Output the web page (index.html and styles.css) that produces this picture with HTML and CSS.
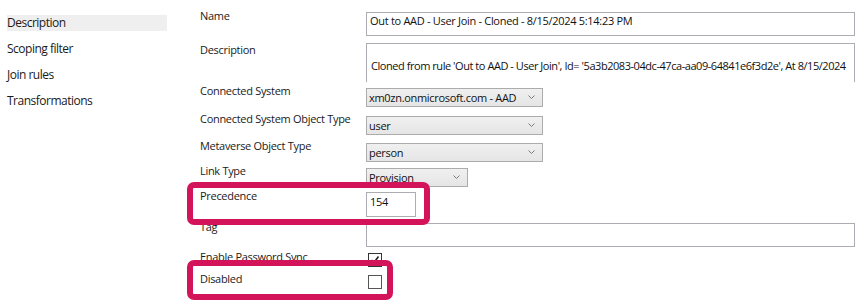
FILE: index.html
```html
<!DOCTYPE html>
<html lang="en">
  <head>
    <meta charset="UTF-8" />
    <title>Sync Rule</title>
    <link rel="stylesheet" href="styles.css">
  </head>
  <body>
    <div class="page">
      <ul class="nav">
        <li class="nav__item active">Description</li>
        <li class="nav__item">Scoping filter</li>
        <li class="nav__item">Join rules</li>
        <li class="nav__item">Transformations</li>
      </ul>

      <div class="form">
        <div class="row row--name">
          <span class="label">Name</span>
          <div class="input input--wide">Out to AAD - User Join - Cloned - 8/15/2024 5:14:23 PM</div>
        </div>
        <div class="row row--desc">
          <span class="label label--desc">Description</span>
          <div class="textarea">Cloned from rule 'Out to AAD - User Join', Id= '5a3b2083-04dc-47ca-aa09-64841e6f3d2e', At 8/15/2024</div>
        </div>
        <div class="row row--cs">
          <span class="label">Connected System</span>
          <div class="select">xm0zn.onmicrosoft.com - AAD
            <svg class="select__arrow" width="7" height="4" viewBox="0 0 7 4"><polyline points="0.5,0.5 3.5,3.5 6.5,0.5" fill="none" stroke="#7a7a7a" stroke-width="1"/></svg>
          </div>
        </div>
        <div class="row row--csot">
          <span class="label">Connected System Object Type</span>
          <div class="select">user
            <svg class="select__arrow" width="7" height="4" viewBox="0 0 7 4"><polyline points="0.5,0.5 3.5,3.5 6.5,0.5" fill="none" stroke="#7a7a7a" stroke-width="1"/></svg>
          </div>
        </div>
        <div class="row row--mot">
          <span class="label">Metaverse Object Type</span>
          <div class="select">person
            <svg class="select__arrow" width="7" height="4" viewBox="0 0 7 4"><polyline points="0.5,0.5 3.5,3.5 6.5,0.5" fill="none" stroke="#7a7a7a" stroke-width="1"/></svg>
          </div>
        </div>
        <div class="row row--link">
          <span class="label">Link Type</span>
          <div class="select select--short">Provision
            <svg class="select__arrow" width="7" height="4" viewBox="0 0 7 4"><polyline points="0.5,0.5 3.5,3.5 6.5,0.5" fill="none" stroke="#7a7a7a" stroke-width="1"/></svg>
          </div>
        </div>
        <div class="row row--prec">
          <span class="label">Precedence</span>
          <div class="input input--num">154</div>
        </div>
        <div class="row row--tag">
          <span class="label">Tag</span>
          <div class="input input--wide"></div>
        </div>
        <div class="row row--eps">
          <span class="label">Enable Password Sync</span>
          <div class="checkbox">
            <svg width="12" height="12" viewBox="0 0 12 12"><polyline points="2.5,6 5,8.5 9.5,2.5" fill="none" stroke="#222" stroke-width="1.6"/></svg>
          </div>
        </div>
        <div class="row row--disabled">
          <span class="label">Disabled</span>
          <div class="checkbox checkbox--empty"></div>
        </div>

        <div class="highlight highlight--prec"></div>
        <div class="highlight highlight--disabled"></div>
      </div>
    </div>
  </body>
</html>
```

FILE: styles.css
```css
* {
  padding: 0;
  margin: 0;
  box-sizing: border-box;
}
body {
  background-color: white;
  font-family: "Open Sans", "Noto Sans", sans-serif;
  color: #111;
  overflow: hidden;
}

.page {
  display: flex;
  align-items: flex-start;
}

.nav {
  list-style: none;
  width: 160px;
  margin-left: 7px;
  padding-top: 15px;
  display: flex;
  flex-direction: column;
  gap: 10px;
}

.nav__item {
  height: 16px;
  line-height: 16px;
  font-size: 12px;
  letter-spacing: -0.5px;
  color: #1a1a1a;
}

.nav__item.active {
  background-color: #efefef;
}

.form {
  position: relative;
  margin-left: 33px;
  padding-top: 12px;
  flex: 1;
  font-size: 11px;
  letter-spacing: -0.3px;
}

.row {
  display: flex;
  align-items: flex-start;
}

.row--name { height: 31px; }
.row--desc { height: 44px; }
.row--cs { height: 28px; }
.row--csot { height: 27px; }
.row--mot { height: 25px; }
.row--link { height: 25px; }
.row--prec { height: 31px; }
.row--tag { height: 30px; }
.row--eps { height: 22px; }
.row--disabled { height: 30px; }

.label {
  width: 166px;
  flex-shrink: 0;
  line-height: 14px;
  margin-top: -3px;
  white-space: nowrap;
  color: #1a1a1a;
}

.label--desc {
  margin-top: 0;
}

.input {
  height: 24px;
  border: 1px solid #abadb3;
  padding: 0 3px;
  line-height: 15px;
  white-space: nowrap;
  overflow: hidden;
}

.input--wide {
  width: 489px;
}

.input--num {
  width: 50px;
  height: 25px;
  padding-top: 1px;
}

.textarea {
  width: 489px;
  height: 39px;
  border: 1px solid #abadb3;
  border-bottom: none;
  padding: 14px 2px 0 4px;
  line-height: 15px;
  letter-spacing: -0.45px;
  white-space: nowrap;
  overflow: hidden;
}

.select {
  position: relative;
  width: 177px;
  height: 19px;
  margin-top: 1px;
  border: 1px solid #acacac;
  background: linear-gradient(#f0f0f0, #e5e5e5);
  padding-left: 2px;
  line-height: 17px;
  white-space: nowrap;
}

.select--short {
  width: 102px;
}

.select__arrow {
  position: absolute;
  right: 7px;
  top: 6px;
}

.checkbox {
  width: 14px;
  height: 14px;
  margin-left: 2px;
  border: 1px solid #333;
  background-color: white;
  display: flex;
  align-items: center;
  justify-content: center;
}

.checkbox--empty {
  border-color: #555;
}

.highlight {
  position: absolute;
  left: -13px;
  border: 6px solid #d4145a;
  border-radius: 7px;
}

.highlight--prec {
  top: 182px;
  width: 243px;
  height: 43px;
}

.highlight--disabled {
  top: 260px;
  width: 206px;
  height: 40px;
}
```
